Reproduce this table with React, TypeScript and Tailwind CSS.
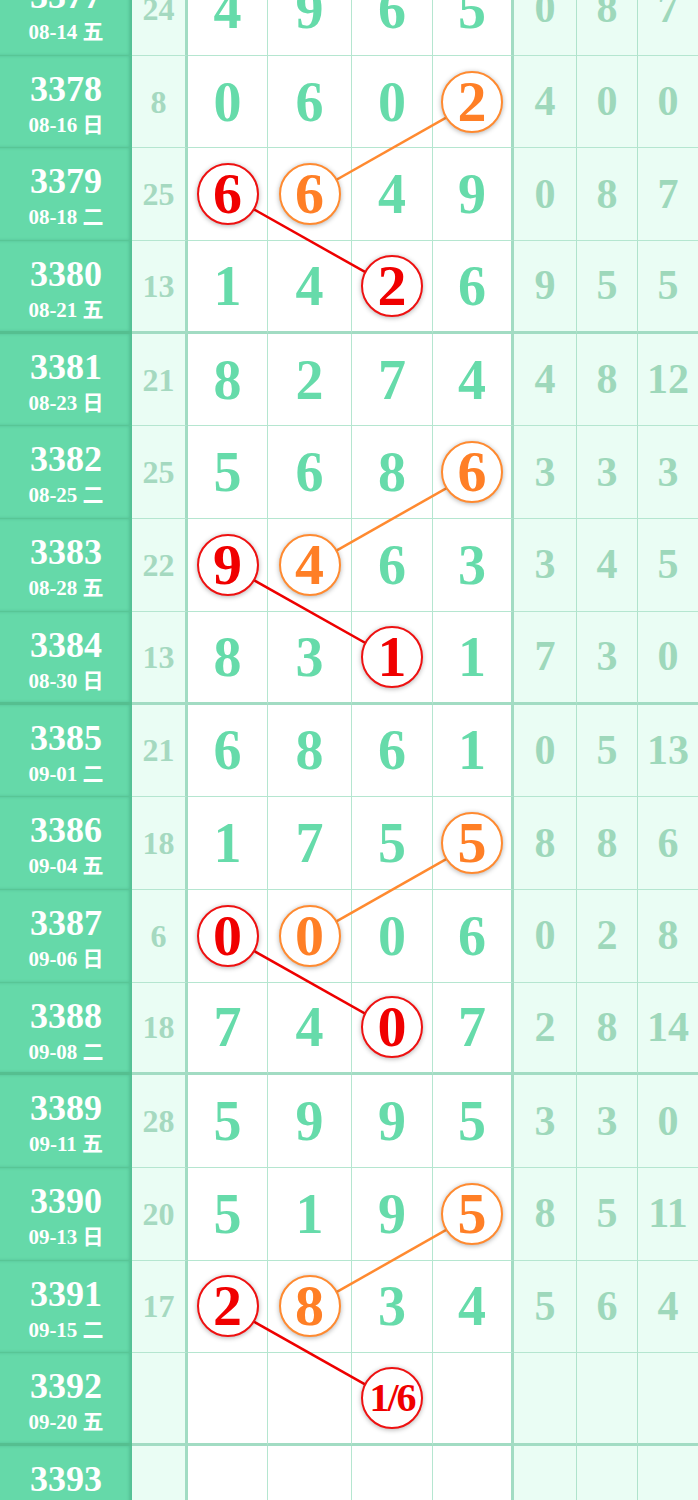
import React from "react";

type Row = {
  n: string;
  d: string;
  s: string;
  v: string[];
  r: string[];
  o?: number;
  red?: number;
};

const rows: Row[] = [
  { n: "3377", d: "08-14 五", s: "24", v: ["4", "9", "6", "5"], r: ["0", "8", "7"] },
  { n: "3378", d: "08-16 日", s: "8", v: ["0", "6", "0", "2"], r: ["4", "0", "0"], o: 3 },
  { n: "3379", d: "08-18 二", s: "25", v: ["6", "6", "4", "9"], r: ["0", "8", "7"], red: 0, o: 1 },
  { n: "3380", d: "08-21 五", s: "13", v: ["1", "4", "2", "6"], r: ["9", "5", "5"], red: 2 },
  { n: "3381", d: "08-23 日", s: "21", v: ["8", "2", "7", "4"], r: ["4", "8", "12"] },
  { n: "3382", d: "08-25 二", s: "25", v: ["5", "6", "8", "6"], r: ["3", "3", "3"], o: 3 },
  { n: "3383", d: "08-28 五", s: "22", v: ["9", "4", "6", "3"], r: ["3", "4", "5"], red: 0, o: 1 },
  { n: "3384", d: "08-30 日", s: "13", v: ["8", "3", "1", "1"], r: ["7", "3", "0"], red: 2 },
  { n: "3385", d: "09-01 二", s: "21", v: ["6", "8", "6", "1"], r: ["0", "5", "13"] },
  { n: "3386", d: "09-04 五", s: "18", v: ["1", "7", "5", "5"], r: ["8", "8", "6"], o: 3 },
  { n: "3387", d: "09-06 日", s: "6", v: ["0", "0", "0", "6"], r: ["0", "2", "8"], red: 0, o: 1 },
  { n: "3388", d: "09-08 二", s: "18", v: ["7", "4", "0", "7"], r: ["2", "8", "14"], red: 2 },
  { n: "3389", d: "09-11 五", s: "28", v: ["5", "9", "9", "5"], r: ["3", "3", "0"] },
  { n: "3390", d: "09-13 日", s: "20", v: ["5", "1", "9", "5"], r: ["8", "5", "11"], o: 3 },
  { n: "3391", d: "09-15 二", s: "17", v: ["2", "8", "3", "4"], r: ["5", "6", "4"], red: 0, o: 1 },
  { n: "3392", d: "09-20 五", s: "", v: ["", "", "1/6", ""], r: ["", "", ""], red: 2 },
  { n: "3393", d: "09-22 日", s: "", v: ["", "", "", ""], r: ["", "", ""] },
];

const ROW_H = 92.7;
const colX = [228, 310, 392.5, 473.5];

function Circle({ text, red }: { text: string; red: boolean }) {
  return (
    <div
      className={
        red
          ? "relative z-10 w-[62px] h-[62px] rounded-full bg-white border-[2.5px] border-[#ee1111] text-[#f00000] flex items-center justify-center shadow-[0_1px_5px_rgba(0,0,0,0.3)]"
          : "relative z-10 w-[62px] h-[62px] rounded-full bg-white border-[2.5px] border-[#ff8a30] text-[#ff7f26] flex items-center justify-center shadow-[0_1px_5px_rgba(0,0,0,0.3)]"
      }
    >
      <span className={text.length > 1 ? "text-[40px] font-bold leading-none tracking-[-2px]" : "text-[58px] font-bold leading-none"}>
        {text}
      </span>
    </div>
  );
}

export default function App() {
  const lines: { x1: number; y1: number; x2: number; y2: number; c: string }[] = [];
  rows.forEach((row, i) => {
    const cy = i * ROW_H + ROW_H / 2;
    if (row.o === 1 && i > 0) {
      lines.push({ x1: colX[1], y1: cy, x2: colX[3], y2: cy - ROW_H, c: "#ff8a30" });
    }
    if (row.red === 0 && i < rows.length - 1) {
      lines.push({ x1: colX[0], y1: cy, x2: colX[2], y2: cy + ROW_H, c: "#ee0000" });
    }
  });

  return (
    <div className="w-[698px] h-[1500px] overflow-hidden bg-white font-['Liberation_Serif','Noto_Sans_CJK_SC',serif]">
      <div className="relative -mt-[37px]">
        <svg className="absolute left-0 top-0 pointer-events-none" width={698} height={rows.length * ROW_H}>
          {lines.map((l, k) => (
            <line key={k} x1={l.x1} y1={l.y1} x2={l.x2} y2={l.y2} stroke={l.c} strokeWidth={2.5} />
          ))}
        </svg>
        {rows.map((row) => {
          const group = (parseInt(row.n) - 3380) % 4 === 0;
          return (
            <div
              key={row.n}
              className="grid grid-cols-[132px_56px_80px_84px_81px_81px_63px_61px_60px] h-[92.7px]"
            >
              <div
                className={
                  group
                    ? "bg-[#65d9a9] border-b-[3px] border-[#55bf90] shadow-[inset_-3px_0_3px_rgba(40,120,90,0.25)] flex flex-col items-center pt-[14px] text-white"
                    : "bg-[#65d9a9] border-b border-[#58c696] shadow-[inset_-3px_0_3px_rgba(40,120,90,0.25)] flex flex-col items-center pt-[14px] text-white"
                }
              >
                <div className="text-[36px] leading-[38px] font-semibold">{row.n}</div>
                <div className="text-[21px] leading-[22px] mt-[6px] font-bold">{row.d}</div>
              </div>
              <div
                className={
                  group
                    ? "bg-[#eafdf4] border-r-[3px] border-r-[#a2dcc3] border-b-[3px] border-b-[#a2dcc3] flex items-center justify-center text-[32px] font-bold text-[#a5d9c0]"
                    : "bg-[#eafdf4] border-r-[3px] border-r-[#a2dcc3] border-b border-b-[#b5e6d0] flex items-center justify-center text-[32px] font-bold text-[#a5d9c0]"
                }
              >
                {row.s}
              </div>
              {row.v.map((val, c) => {
                const last = c === 3;
                const cls = group
                  ? last
                    ? "bg-white border-r-[3px] border-r-[#a2dcc3] border-b-[3px] border-b-[#a2dcc3] flex items-center justify-center"
                    : "bg-white border-r border-r-[#b5e6d0] border-b-[3px] border-b-[#a2dcc3] flex items-center justify-center"
                  : last
                  ? "bg-white border-r-[3px] border-r-[#a2dcc3] border-b border-b-[#b5e6d0] flex items-center justify-center"
                  : "bg-white border-r border-r-[#b5e6d0] border-b border-b-[#b5e6d0] flex items-center justify-center";
                const marked = row.o === c || row.red === c;
                return (
                  <div key={c} className={cls}>
                    {marked ? (
                      <Circle text={val} red={row.red === c} />
                    ) : (
                      <span className="text-[56px] font-bold leading-none text-[#66dbaa]">{val}</span>
                    )}
                  </div>
                );
              })}
              {row.r.map((val, c) => (
                <div
                  key={c}
                  className={
                    group
                      ? c < 2
                        ? "bg-[#eafdf4] border-r border-r-[#b0e3cc] border-b-[3px] border-b-[#a2dcc3] flex items-center justify-center text-[42px] font-bold text-[#9ed8bb]"
                        : "bg-[#eafdf4] border-b-[3px] border-b-[#a2dcc3] flex items-center justify-center text-[42px] font-bold text-[#9ed8bb]"
                      : c < 2
                      ? "bg-[#eafdf4] border-r border-r-[#b0e3cc] border-b border-b-[#b5e6d0] flex items-center justify-center text-[42px] font-bold text-[#9ed8bb]"
                      : "bg-[#eafdf4] border-b border-b-[#b5e6d0] flex items-center justify-center text-[42px] font-bold text-[#9ed8bb]"
                  }
                >
                  {val}
                </div>
              ))}
            </div>
          );
        })}
      </div>
    </div>
  );
}
